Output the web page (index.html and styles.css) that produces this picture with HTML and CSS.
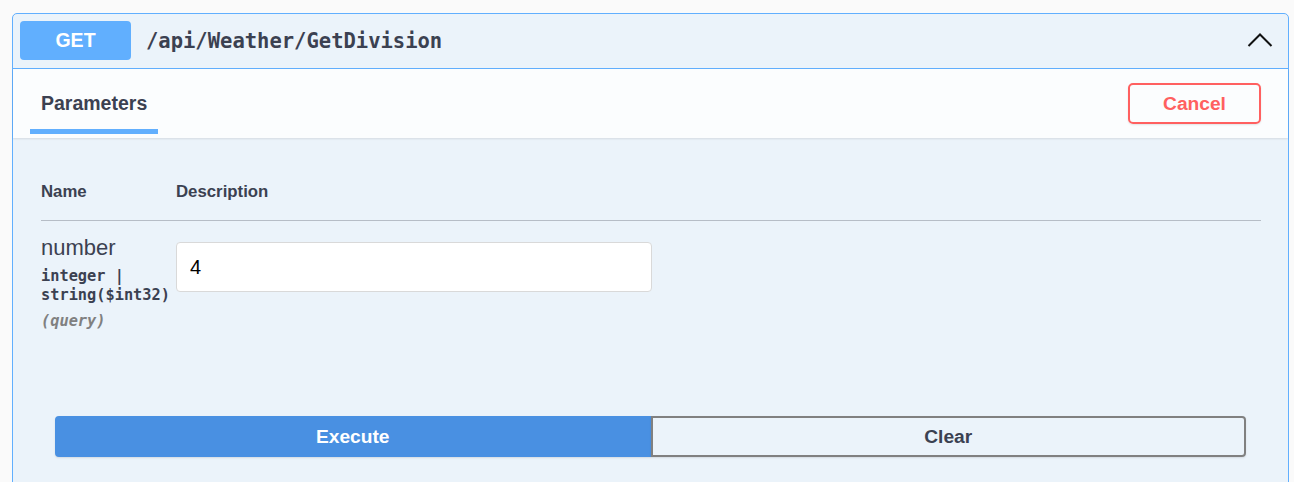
FILE: index.html
```html
<!DOCTYPE html>
<html lang="en">
<head>
<meta charset="utf-8">
<title>GetDivision</title>
<link rel="stylesheet" href="styles.css">
</head>
<body>
<div class="page">
  <div class="opblock">
    <div class="summary">
      <span class="method">GET</span>
      <span class="path">/api/Weather/GetDivision</span>
      <svg class="arrow" width="26" height="16" viewBox="0 0 26 16" aria-hidden="true">
        <polyline points="1.5,14 13,2.5 24.5,14" fill="none" stroke="#111" stroke-width="2"/>
      </svg>
    </div>
    <div class="section-header">
      <div class="tab"><h4>Parameters</h4></div>
      <button class="cancel">Cancel</button>
    </div>
    <div class="params">
      <div class="params-head">
        <span class="col-name">Name</span>
        <span class="col-desc">Description</span>
      </div>
      <div class="param-row">
        <div class="col-name">
          <div class="param-name">number</div>
          <div class="param-type">integer |<br>string($int32)</div>
          <div class="param-in">(query)</div>
        </div>
        <div class="col-desc">
          <input class="param-input" type="text" value="4">
        </div>
      </div>
    </div>
    <div class="execute-wrapper">
      <button class="btn execute">Execute</button>
      <button class="btn clear">Clear</button>
    </div>
  </div>
</div>
</body>
</html>
```

FILE: styles.css
```css
html, body {
  margin: 0;
  padding: 0;
  background: #fafafa;
  font-family: "Liberation Sans", Arial, sans-serif;
  color: #3b4151;
}

.page {
  padding: 13px 5px 0 12px;
}

.opblock {
  border: 1px solid #61affe;
  border-radius: 5px;
  background: #ebf3fa;
  height: 520px;
}

.summary {
  display: flex;
  align-items: center;
  height: 54px;
  padding: 0 15px 0 7px;
  border-bottom: 1px solid #61affe;
}

.method {
  width: 111px;
  height: 39px;
  margin-top: -1px;
  border-radius: 4px;
  background: #61affe;
  color: #fff;
  font-weight: 700;
  font-size: 19.5px;
  display: flex;
  align-items: center;
  justify-content: center;
}

.path {
  margin-left: 15px;
  font-family: "DejaVu Sans Mono", monospace;
  font-weight: 700;
  font-size: 20.5px;
  color: #3b4151;
  flex: 1;
}

.arrow {
  margin-top: -2px;
}

.section-header {
  display: flex;
  align-items: center;
  justify-content: space-between;
  height: 69px;
  padding: 0 27px 0 17px;
  background: rgba(255, 255, 255, 0.8);
  box-shadow: 0 1px 2px rgba(0, 0, 0, 0.1);
}

.tab {
  align-self: stretch;
  display: flex;
  align-items: flex-start;
}

.tab h4 {
  margin: 0;
  padding: 23px 11px 0;
  height: 65px;
  box-sizing: border-box;
  font-size: 19.5px;
  font-weight: 700;
  color: #3b4151;
  border-bottom: 5px solid #61affe;
}

.cancel {
  width: 133px;
  height: 41px;
  border: 2px solid #ff6060;
  border-radius: 5px;
  background: transparent;
  color: #ff6060;
  font-family: "Liberation Sans", Arial, sans-serif;
  font-weight: 700;
  font-size: 19.2px;
  box-shadow: 0 1px 2px rgba(0, 0, 0, 0.1);
}

.params {
  padding: 0 27px 0 28px;
}

.params-head {
  display: flex;
  align-items: center;
  padding-top: 44px;
  padding-bottom: 18px;
  line-height: 20px;
  font-size: 16.8px;
  font-weight: 700;
  border-bottom: 1px solid rgba(59, 65, 81, 0.3);
}

.col-name {
  width: 135px;
  flex: none;
}

.param-row {
  display: flex;
  padding-top: 14px;
}

.param-name {
  font-size: 22px;
  line-height: 26px;
}

.param-type {
  margin-top: 6px;
  font-family: "DejaVu Sans Mono", monospace;
  font-weight: 700;
  font-size: 15.3px;
  line-height: 19px;
  white-space: nowrap;
}

.param-in {
  margin-top: 7px;
  font-family: "DejaVu Sans Mono", monospace;
  font-weight: 700;
  font-style: italic;
  font-size: 15.3px;
  line-height: 19px;
  color: #808080;
}

.param-input {
  margin-top: 7px;
  width: 476px;
  height: 50px;
  box-sizing: border-box;
  border: 1px solid #d9d9d9;
  border-radius: 4px;
  background: #fff;
  padding: 0 13px;
  font-family: "Liberation Sans", Arial, sans-serif;
  font-size: 20px;
  color: #000;
  outline: none;
}

.execute-wrapper {
  display: flex;
  padding: 85px 42px 0 42px;
}

.btn {
  flex: 1;
  height: 41px;
  font-family: "Liberation Sans", Arial, sans-serif;
  font-weight: 700;
  font-size: 19.2px;
  box-shadow: 0 1px 2px rgba(0, 0, 0, 0.1);
}

.execute {
  background: #4990e2;
  border: 2px solid #4990e2;
  color: #fff;
  border-radius: 4px 0 0 4px;
}

.clear {
  background: transparent;
  border: 2px solid #808080;
  color: #3b4151;
  border-radius: 0 4px 4px 0;
}
```
